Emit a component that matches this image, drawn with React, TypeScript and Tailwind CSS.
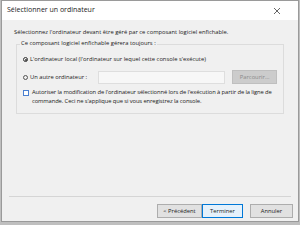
export default function App() {
  const font = { fontFamily: '"Open Sans", "Noto Sans", "DejaVu Sans", sans-serif' };
  return (
    <div className="w-[300px] h-[225px] bg-[#bfbfbf] overflow-hidden relative" style={font}>
      <div className="absolute left-[1px] top-0 w-[298px] h-[222px] bg-[#f0f0f0] border border-[#9a9a9a] flex flex-col">
        <div className="h-[19px] bg-white flex items-center justify-between px-[5px] shrink-0">
          <span className="text-[7px] text-[#222]">Sélectionner un ordinateur</span>
          <svg width="8" height="8" viewBox="0 0 8 8" className="mr-[12px]">
            <path d="M1 1L7 7M7 1L1 7" stroke="#555" strokeWidth="0.9" />
          </svg>
        </div>
        <div className="flex-1 flex flex-col px-[12px] pt-[8px] text-[5.8px] text-[#1a1a1a] leading-[9px]">
          <div>Sélectionnez l'ordinateur devant être géré par ce composant logiciel enfichable.</div>
          <div className="relative mt-[7px] border border-[#dcdcdc] h-[70px] mx-[2px] px-[6px] pt-[9px]">
            <span className="absolute left-[3px] top-[-6px] bg-[#f0f0f0] px-[1px]">Ce composant logiciel enfichable gérera toujours :</span>
            <div className="flex items-center gap-[2px] mt-[1px]">
              <span className="w-[5px] h-[5px] rounded-full border border-[#333] flex items-center justify-center">
                <span className="w-[2px] h-[2px] rounded-full bg-[#333]" />
              </span>
              <span>L'ordinateur local (l'ordinateur sur lequel cette console s'exécute)</span>
            </div>
            <div className="flex items-center gap-[2px] mt-[6px]">
              <span className="w-[5px] h-[5px] rounded-full border border-[#555]" />
              <span className="w-[68px]">Un autre ordinateur :</span>
              <span className="w-[131px] h-[13px] bg-[#f7f7f7] border border-[#dedede]" />
              <span className="ml-[5px] w-[46px] h-[14px] bg-[#cccccc] border border-[#bfbfbf] text-[#8a8a8a] flex items-center justify-center">Parcourir...</span>
            </div>
            <div className="flex items-start gap-[3px] mt-[4px]">
              <span className="mt-[2px] w-[6px] h-[6px] shrink-0 border border-[#4a7fd0] bg-white" />
              <span className="leading-[8.5px] tracking-[-0.1px] whitespace-nowrap">Autoriser la modification de l'ordinateur sélectionné lors de l'exécution à partir de la ligne de<br />commande. Ceci ne s'applique que si vous enregistrez la console.</span>
            </div>
          </div>
          <div className="flex-1" />
          <div className="h-[1px] bg-[#d5d5d5] mx-[-5px]" />
          <div className="flex justify-end items-center pt-[7px] pb-[3px] mr-[-7px]">
            <span className="w-[45px] h-[14px] bg-[#e1e1e1] border border-[#adadad] flex items-center justify-center">&lt; Précédent</span>
            <span className="w-[41px] h-[14px] bg-[#e5f1fb] border border-[#0078d7] flex items-center justify-center">Terminer</span>
            <span className="ml-[7px] w-[43px] h-[14px] bg-[#e1e1e1] border border-[#adadad] flex items-center justify-center">Annuler</span>
          </div>
        </div>
      </div>
    </div>
  );
}
